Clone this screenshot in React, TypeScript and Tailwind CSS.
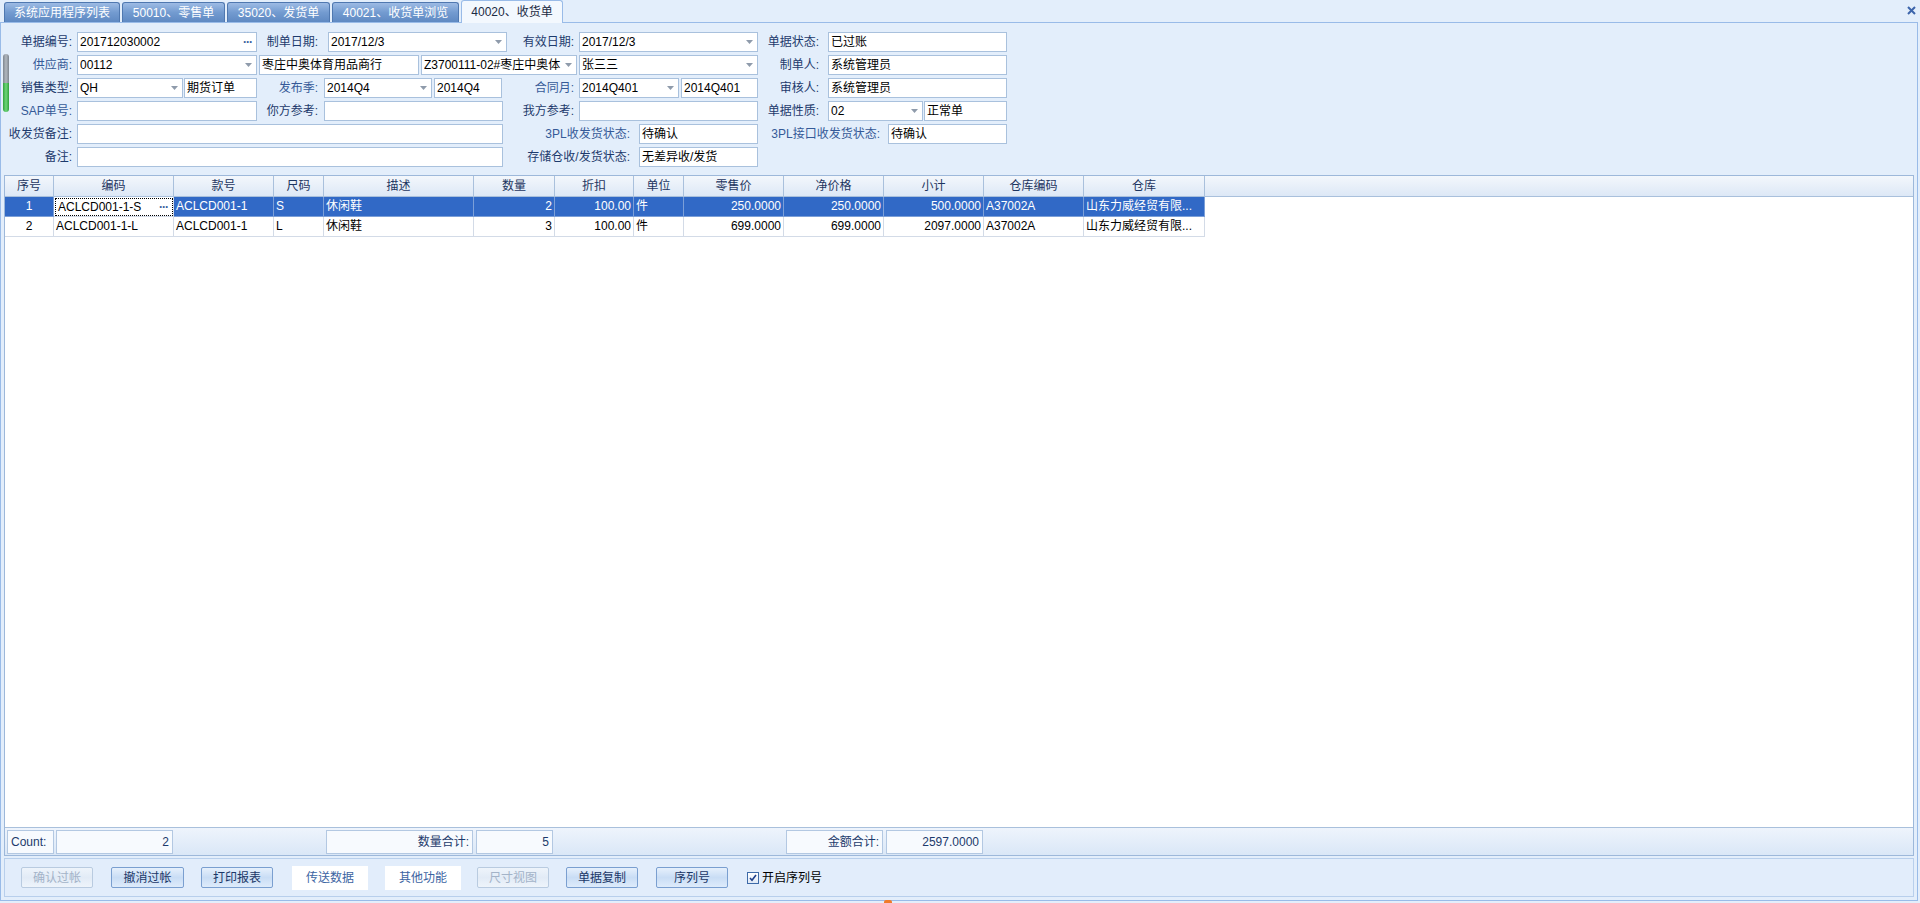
import React from 'react';

const FONT = '"Liberation Sans","Noto Sans CJK SC",sans-serif';

type It =
  | { k: 'l'; c: string; t: string; tone?: 'a' | 'b' }
  | { k: 'i'; c: string; t?: string; dd?: boolean; dots?: boolean };

function Arrow() {
  return (
    <svg width="7" height="4" viewBox="0 0 7 4" className="shrink-0">
      <path d="M0 0h7L3.5 4z" fill="#8f9bab" />
    </svg>
  );
}

function FormRow({ items }: { items: It[] }) {
  return (
    <div className="flex h-[20px] items-stretch">
      {items.map((it, i) =>
        it.k === 'l' ? (
          <div
            key={i}
            className={`${it.c} shrink-0 whitespace-nowrap text-right text-[12px] leading-[20px] ${
              it.tone === 'b' ? 'text-[#355a98]' : 'text-[#1d3a6c]'
            }`}
          >
            {it.t}
          </div>
        ) : (
          <div
            key={i}
            className={`${it.c} shrink-0 flex items-center overflow-hidden border border-[#a9c1dd] bg-white pl-[2px] pr-[4px] text-[12px] text-black`}
          >
            <span className="flex-1 overflow-hidden whitespace-nowrap leading-[18px]">{it.t ?? ''}</span>
            {it.dd && <Arrow />}
            {it.dots && <span className="text-[12px] font-bold leading-[10px] text-[#3a5f9c] tracking-[-1px]">···</span>}
          </div>
        )
      )}
    </div>
  );
}

const rows: It[][] = [
  [
    { k: 'l', c: 'w-[71px]', t: '单据编号:' },
    { k: 'i', c: 'ml-[5px] w-[180px]', t: '201712030002', dots: true },
    { k: 'l', c: 'ml-[2px] w-[59px]', t: '制单日期:' },
    { k: 'i', c: 'ml-[10px] w-[179px]', t: '2017/12/3', dd: true },
    { k: 'l', c: 'ml-[3px] w-[64px]', t: '有效日期:' },
    { k: 'i', c: 'ml-[5px] w-[179px]', t: '2017/12/3', dd: true },
    { k: 'l', c: 'ml-[2px] w-[59px]', t: '单据状态:' },
    { k: 'i', c: 'ml-[9px] w-[179px]', t: '已过账' },
  ],
  [
    { k: 'l', c: 'w-[71px]', t: '供应商:', tone: 'b' },
    { k: 'i', c: 'ml-[5px] w-[180px]', t: '00112', dd: true },
    { k: 'i', c: 'ml-[2px] w-[160px]', t: '枣庄中奥体育用品商行' },
    { k: 'i', c: 'ml-[2px] w-[156px]', t: 'Z3700111-02#枣庄中奥体', dd: true },
    { k: 'i', c: 'ml-[2px] w-[179px]', t: '张三三', dd: true },
    { k: 'l', c: 'ml-[2px] w-[59px]', t: '制单人:' },
    { k: 'i', c: 'ml-[9px] w-[179px]', t: '系统管理员' },
  ],
  [
    { k: 'l', c: 'w-[71px]', t: '销售类型:' },
    { k: 'i', c: 'ml-[5px] w-[106px]', t: 'QH', dd: true },
    { k: 'i', c: 'ml-[1px] w-[73px]', t: '期货订单' },
    { k: 'l', c: 'ml-[2px] w-[59px]', t: '发布季:', tone: 'b' },
    { k: 'i', c: 'ml-[6px] w-[108px]', t: '2014Q4', dd: true },
    { k: 'i', c: 'ml-[2px] w-[68px]', t: '2014Q4' },
    { k: 'l', c: 'ml-[8px] w-[64px]', t: '合同月:', tone: 'b' },
    { k: 'i', c: 'ml-[5px] w-[100px]', t: '2014Q401', dd: true },
    { k: 'i', c: 'ml-[2px] w-[77px]', t: '2014Q401' },
    { k: 'l', c: 'ml-[2px] w-[59px]', t: '审核人:' },
    { k: 'i', c: 'ml-[9px] w-[179px]', t: '系统管理员' },
  ],
  [
    { k: 'l', c: 'w-[71px]', t: 'SAP单号:', tone: 'b' },
    { k: 'i', c: 'ml-[5px] w-[180px]' },
    { k: 'l', c: 'ml-[2px] w-[59px]', t: '你方参考:' },
    { k: 'i', c: 'ml-[6px] w-[179px]' },
    { k: 'l', c: 'ml-[7px] w-[64px]', t: '我方参考:' },
    { k: 'i', c: 'ml-[5px] w-[179px]' },
    { k: 'l', c: 'ml-[2px] w-[59px]', t: '单据性质:' },
    { k: 'i', c: 'ml-[9px] w-[95px]', t: '02', dd: true },
    { k: 'i', c: 'ml-[1px] w-[83px]', t: '正常单' },
  ],
  [
    { k: 'l', c: 'w-[71px]', t: '收发货备注:' },
    { k: 'i', c: 'ml-[5px] w-[426px]' },
    { k: 'l', c: 'ml-[2px] w-[125px]', t: '3PL收发货状态:', tone: 'b' },
    { k: 'i', c: 'ml-[9px] w-[119px]', t: '待确认' },
    { k: 'l', c: 'ml-[2px] w-[120px]', t: '3PL接口收发货状态:', tone: 'b' },
    { k: 'i', c: 'ml-[8px] w-[119px]', t: '待确认' },
  ],
  [
    { k: 'l', c: 'w-[71px]', t: '备注:' },
    { k: 'i', c: 'ml-[5px] w-[426px]' },
    { k: 'l', c: 'ml-[2px] w-[125px]', t: '存储仓收/发货状态:' },
    { k: 'i', c: 'ml-[9px] w-[119px]', t: '无差异收/发货' },
  ],
];

const cols = [
  { h: '序号', w: 'w-[49px]', a: 'text-center' },
  { h: '编码', w: 'w-[120px]', a: 'text-left' },
  { h: '款号', w: 'w-[100px]', a: 'text-left' },
  { h: '尺码', w: 'w-[50px]', a: 'text-left' },
  { h: '描述', w: 'w-[150px]', a: 'text-left' },
  { h: '数量', w: 'w-[81px]', a: 'text-right' },
  { h: '折扣', w: 'w-[79px]', a: 'text-right' },
  { h: '单位', w: 'w-[50px]', a: 'text-left' },
  { h: '零售价', w: 'w-[100px]', a: 'text-right' },
  { h: '净价格', w: 'w-[100px]', a: 'text-right' },
  { h: '小计', w: 'w-[100px]', a: 'text-right' },
  { h: '仓库编码', w: 'w-[100px]', a: 'text-left' },
  { h: '仓库', w: 'w-[121px]', a: 'text-left' },
];

const data = [
  ['1', 'ACLCD001-1-S', 'ACLCD001-1', 'S', '休闲鞋', '2', '100.00', '件', '250.0000', '250.0000', '500.0000', 'A37002A', '山东力威经贸有限...'],
  ['2', 'ACLCD001-1-L', 'ACLCD001-1', 'L', '休闲鞋', '3', '100.00', '件', '699.0000', '699.0000', '2097.0000', 'A37002A', '山东力威经贸有限...'],
];

function Tab({ label, active, w }: { label: string; active?: boolean; w: string }) {
  if (active)
    return (
      <div
        className={`${w} relative z-10 -mb-[1px] flex h-[23px] items-center justify-center rounded-t-[3px] border border-b-0 border-[#99bbe8] bg-[#f3f8fe] text-[12px] text-[#1b2b44]`}
      >
        {label}
      </div>
    );
  return (
    <div
      className={`${w} flex h-[20px] items-center justify-center rounded-t-[3px] border border-b-0 border-[#4f78b0] bg-gradient-to-b from-[#9dbbe4] via-[#739bd0] to-[#5f89c2] text-[12px] text-white`}
    >
      {label}
    </div>
  );
}

function Btn({ label, c, kind }: { label: string; c: string; kind?: 'dis' | 'flat' }) {
  if (kind === 'flat')
    return (
      <div className={`${c} flex h-[24px] shrink-0 items-center justify-center bg-white text-[12px] text-[#3c64a2]`}>{label}</div>
    );
  if (kind === 'dis')
    return (
      <div
        className={`${c} flex h-[21px] shrink-0 items-center justify-center rounded-[2px] border border-[#b9cbe0] bg-gradient-to-b from-[#eef4fb] via-[#e2ebf6] to-[#eef4fb] text-[12px] text-[#a3b3c8]`}
      >
        {label}
      </div>
    );
  return (
    <div
      className={`${c} flex h-[21px] shrink-0 items-center justify-center rounded-[2px] border border-[#7a9fd0] bg-gradient-to-b from-[#e6f0fc] via-[#c9ddf5] to-[#deebfb] text-[12px] text-[#1b3767]`}
    >
      {label}
    </div>
  );
}

function FootBox({ c, t, align }: { c: string; t: string; align: 'l' | 'r' }) {
  return (
    <div
      className={`${c} flex h-[24px] shrink-0 items-center border border-[#b3c8e2] bg-[#f7fafe] px-[3px] text-[12px] text-[#1d3a6c] ${
        align === 'r' ? 'justify-end' : 'justify-start'
      }`}
    >
      {t}
    </div>
  );
}

export default function App() {
  return (
    <div className="relative h-[903px] w-[1920px] overflow-hidden bg-[#e3eefb]" style={{ fontFamily: FONT }}>
      {/* tab strip */}
      <div className="flex h-[22px] items-end pl-[4px]">
        <Tab label="系统应用程序列表" w="w-[116px]" />
        <div className="ml-[2px]">
          <Tab label="50010、零售单" w="w-[103px]" />
        </div>
        <div className="ml-[2px]">
          <Tab label="35020、发货单" w="w-[103px]" />
        </div>
        <div className="ml-[2px]">
          <Tab label="40021、收货单浏览" w="w-[127px]" />
        </div>
        <div className="ml-[2px]">
          <Tab label="40020、收货单" w="w-[102px]" active />
        </div>
        <div className="ml-auto mb-[7px] mr-[4px]">
          <svg width="9" height="9" viewBox="0 0 9 9">
            <path d="M1 1L8 8M8 1L1 8" stroke="#3d65ab" strokeWidth="2" />
          </svg>
        </div>
      </div>

      {/* content panel */}
      <div className="flex h-[879px] w-[1918px] flex-col border border-[#99bbe8] bg-[#e3eefb]">
        {/* form */}
        <div className="flex h-[152px] shrink-0 flex-col gap-[3px] pt-[9px]">
          {rows.map((r, i) => (
            <FormRow key={i} items={r} />
          ))}
        </div>

        {/* grid */}
        <div className="mx-[3px] flex h-[681px] shrink-0 flex-col border border-[#9db8da] bg-white">
          <div className="flex h-[21px] shrink-0 border-b border-[#a9c0dc] bg-gradient-to-b from-[#f3f7fc] to-[#dde8f6]">
            {cols.map((c) => (
              <div
                key={c.h}
                className={`${c.w} shrink-0 border-r border-[#a9c0dc] text-center text-[12px] leading-[20px] text-[#1d3560]`}
              >
                {c.h}
              </div>
            ))}
            <div className="flex-1" />
          </div>
          {data.map((row, ri) => {
            const sel = ri === 0;
            return (
              <div key={ri} className="flex h-[20px] shrink-0">
                {row.map((v, ci) => {
                  const c = cols[ci];
                  if (sel && ci === 1)
                    return (
                      <div
                        key={ci}
                        className={`${c.w} flex shrink-0 items-center border-r border-b border-[#d3dbe7] bg-white pl-[1px]`}
                      >
                        <div className="flex h-[18px] flex-1 items-center border border-dotted border-black pl-[2px] pr-[4px] text-[12px] text-black">
                          <span className="flex-1">{v}</span>
                          <span className="text-[12px] font-bold leading-[10px] text-[#3a5f9c] tracking-[-1px]">···</span>
                        </div>
                      </div>
                    );
                  return (
                    <div
                      key={ci}
                      className={`${c.w} ${c.a} shrink-0 overflow-hidden whitespace-nowrap border-r border-b px-[2px] text-[12px] leading-[19px] ${
                        sel ? 'border-[#7b9fd8] bg-[#3169c6] text-white' : 'border-[#d3dbe7] text-black'
                      }`}
                    >
                      {v}
                    </div>
                  );
                })}
              </div>
            );
          })}
          <div className="flex-1" />
          <div className="flex h-[28px] shrink-0 items-center border-t border-[#a9c0dc] bg-gradient-to-b from-[#eef4fc] to-[#dae7f7]">
            <FootBox c="ml-[2px] w-[47px]" t="Count:" align="l" />
            <FootBox c="ml-[2px] w-[117px]" t="2" align="r" />
            <FootBox c="ml-[153px] w-[147px]" t="数量合计:" align="r" />
            <FootBox c="ml-[3px] w-[77px]" t="5" align="r" />
            <FootBox c="ml-[233px] w-[97px]" t="金额合计:" align="r" />
            <FootBox c="ml-[3px] w-[97px]" t="2597.0000" align="r" />
          </div>
        </div>

        {/* buttons */}
        <div className="mx-[3px] mt-[2px] flex h-[39px] shrink-0 items-center border border-[#b8cfec] bg-[#e2edfb] pl-[16px]">
          <Btn label="确认过帐" c="w-[72px]" kind="dis" />
          <Btn label="撤消过帐" c="ml-[18px] w-[73px]" />
          <Btn label="打印报表" c="ml-[17px] w-[72px]" />
          <Btn label="传送数据" c="ml-[19px] w-[76px]" kind="flat" />
          <Btn label="其他功能" c="ml-[17px] w-[76px]" kind="flat" />
          <Btn label="尺寸视图" c="ml-[16px] w-[72px]" kind="dis" />
          <Btn label="单据复制" c="ml-[17px] w-[72px]" />
          <Btn label="序列号" c="ml-[18px] w-[72px]" />
          <div className="ml-[19px] flex h-[12px] w-[12px] shrink-0 items-center justify-center border border-[#3d6aa8] bg-gradient-to-b from-[#ffffff] to-[#dfe9f6]">
            <svg width="8" height="8" viewBox="0 0 8 8">
              <path d="M1 4l2 2.3L7 1" stroke="#1d3f8a" strokeWidth="1.6" fill="none" />
            </svg>
          </div>
          <span className="ml-[3px] text-[12px] text-black">开启序列号</span>
        </div>
      </div>

      {/* left splitter indicator */}
      <div className="absolute left-[3px] top-[54px] h-[29px] w-[6px] rounded-t-[3px] bg-gradient-to-r from-[#7d858f] via-[#b2b8bf] to-[#7d858f]" />
      <div className="absolute left-[3px] top-[83px] h-[29px] w-[6px] rounded-b-[3px] bg-gradient-to-r from-[#2ea23c] via-[#6fd67a] to-[#2ea23c]" />
      {/* small orange mark at bottom */}
      <div className="absolute left-[884px] top-[900px] h-[3px] w-[8px] rounded-t-[2px] bg-[#f07a2a]" />
    </div>
  );
}
